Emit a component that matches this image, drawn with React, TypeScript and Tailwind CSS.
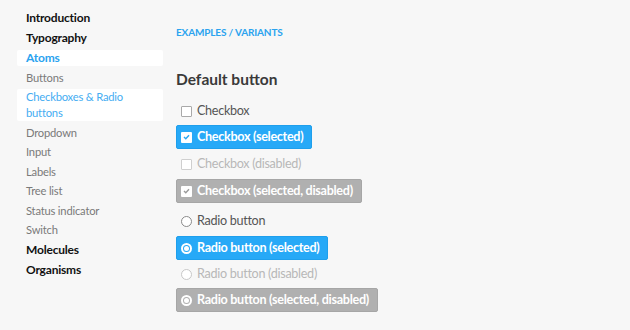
import React from "react";

const nav = [
  { label: "Introduction", type: "section" },
  { label: "Typography", type: "section" },
  { label: "Atoms", type: "section", active: true },
  { label: "Buttons", type: "item" },
  { label: "Checkboxes & Radio buttons", type: "item", active: true },
  { label: "Dropdown", type: "item" },
  { label: "Input", type: "item" },
  { label: "Labels", type: "item" },
  { label: "Tree list", type: "item" },
  { label: "Status indicator", type: "item" },
  { label: "Switch", type: "item" },
  { label: "Molecules", type: "section" },
  { label: "Organisms", type: "section" },
];

const Box = ({ checked, gray, faded }: { checked?: boolean; gray?: boolean; faded?: boolean }) => (
  <span
    className={`flex h-[11px] w-[11px] shrink-0 items-center justify-center rounded-[1px] bg-white ${
      checked ? "" : faded ? "border border-[#cfcfcf]" : "border border-[#a9a9a9]"
    }`}
  >
    {checked && (
      <svg width="7" height="6" viewBox="0 0 7 6">
        <path d="M1 3 L2.8 4.8 L6 1.2" fill="none" stroke={gray ? "#9a9a9a" : "#27a6f2"} strokeWidth="1.4" />
      </svg>
    )}
  </span>
);

const Radio = ({ checked, faded }: { checked?: boolean; faded?: boolean }) =>
  checked ? (
    <span className="flex h-[11px] w-[11px] shrink-0 items-center justify-center rounded-full border-2 border-white">
      <span className="h-[5px] w-[5px] rounded-full bg-white" />
    </span>
  ) : (
    <span
      className={`h-[11px] w-[11px] shrink-0 rounded-full border bg-white ${
        faded ? "border-[#c8c8c8]" : "border-[#8a8a8a]"
      }`}
    />
  );

const Plain = ({ children, faded }: { children: React.ReactNode; faded?: boolean }) => (
  <div
    className={`flex h-[20px] items-center gap-[5px] px-[5px] ${faded ? "text-[#b8b8b8]" : "text-[#555]"}`}
  >
    {children}
  </div>
);

const Filled = ({ children, gray }: { children: React.ReactNode; gray?: boolean }) => (
  <div
    className={`flex h-[24px] items-center gap-[5px] rounded-[2px] border pl-[4px] pr-[8px] font-bold text-white ${
      gray ? "border-[#a6a6a6] bg-[#b0b0b0]" : "border-[#1f9fec] bg-[#27a9f7]"
    }`}
  >
    {children}
  </div>
);

const App = () => {
  return (
    <div
      className="flex h-[330px] w-[630px] bg-[#f7f7f7]"
      style={{ fontFamily: "Lato, 'Liberation Sans', sans-serif" }}
    >
      <aside className="flex w-[176px] flex-col pl-[17px] pr-[13px] pt-[8px]">
        {nav.map((n) =>
          n.type === "section" ? (
            <div
              key={n.label}
              className={`my-[2px] flex h-[16px] items-center rounded-[2px] px-[9px] text-[12px] font-bold tracking-[-0.2px] ${
                n.active ? "bg-white text-[#2aa3ef]" : "text-[#111]"
              }`}
            >
              {n.label}
            </div>
          ) : (
            <div
              key={n.label}
              className={`my-[1.75px] rounded-[2px] px-[9px] text-[11.2px] leading-[16px] tracking-[-0.2px] ${
                n.active ? "bg-white text-[#45adf2]" : "text-[#7a7a7a]"
              }`}
            >
              {n.label}
            </div>
          )
        )}
      </aside>
      <main className="flex flex-col pt-[25px] text-[12.6px] tracking-[-0.3px]">
        <div className="text-[10px] font-bold tracking-[-0.15px] text-[#2aa3ef]">EXAMPLES / VARIANTS</div>
        <h2 className="mt-[28px] text-[15.5px] font-bold tracking-normal text-[#3a3a3a]">Default button</h2>
        <div className="mt-[10px] flex flex-col items-start">
          <Plain>
            <Box />
            Checkbox
          </Plain>
          <div className="mt-[4px]">
            <Filled>
              <Box checked />
              Checkbox (selected)
            </Filled>
          </div>
          <div className="mt-[5px]">
            <Plain faded>
              <Box faded />
              Checkbox (disabled)
            </Plain>
          </div>
          <div className="mt-[5px]">
            <Filled gray>
              <Box checked gray />
              Checkbox (selected, disabled)
            </Filled>
          </div>
          <div className="mt-[8px]">
            <Plain>
              <Radio />
              Radio button
            </Plain>
          </div>
          <div className="mt-[5px]">
            <Filled>
              <Radio checked />
              Radio button (selected)
            </Filled>
          </div>
          <div className="mt-[4px]">
            <Plain faded>
              <Radio faded />
              Radio button (disabled)
            </Plain>
          </div>
          <div className="mt-[4px]">
            <Filled gray>
              <Radio checked />
              Radio button (selected, disabled)
            </Filled>
          </div>
        </div>
      </main>
    </div>
  );
};

export default App;
